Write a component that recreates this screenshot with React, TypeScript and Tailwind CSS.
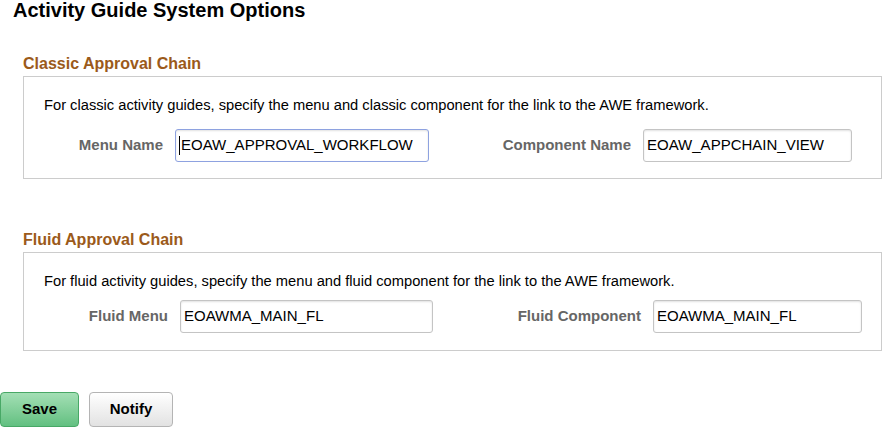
import React from "react";

const font = { fontFamily: '"Liberation Sans", Arial, sans-serif' };

function Field({
  label,
  value,
  labelW,
  inputW,
  focused,
}: {
  label: string;
  value: string;
  labelW: string;
  inputW: string;
  focused?: boolean;
}) {
  return (
    <div className="flex items-center gap-[12px]">
      <div className={`${labelW} text-right text-[15px] font-bold text-[#666666]`}>{label}</div>
      <div
        className={`${inputW} h-[33px] flex items-center px-[3px] rounded-[3px] border bg-white text-[15px] text-black shadow-[inset_0_1px_2px_rgba(0,0,0,0.12)] ${
          focused ? "border-[#8ea2e0]" : "border-[#c4c4c4]"
        }`}
      >
        {focused && <span className="w-px h-[19px] bg-black mr-px" />}
        {value}
      </div>
    </div>
  );
}

export default function App() {
  return (
    <div className="w-[882px] h-[429px] bg-white overflow-hidden" style={font}>
      <h1 className="pl-[13px] text-[20px] leading-[20px] font-bold text-black">
        Activity Guide System Options
      </h1>

      <section className="pl-[23px] mt-[35px]">
        <h2 className="text-[16px] leading-[18px] font-bold text-[#9b5a1a]">Classic Approval Chain</h2>
        <div className="mt-[3px] h-[103px] border border-[#cccccc] pl-[20px] pt-[20px]">
          <p className="text-[14.7px] leading-[17px] text-black">
            For classic activity guides, specify the menu and classic component for the link to the AWE framework.
          </p>
          <div className="flex mt-[15px]">
            <Field label="Menu Name" value="EOAW_APPROVAL_WORKFLOW" labelW="w-[119px]" inputW="w-[254px]" focused />
            <Field label="Component Name" value="EOAW_APPCHAIN_VIEW" labelW="w-[202px]" inputW="w-[209px]" />
          </div>
        </div>
      </section>

      <section className="pl-[23px] mt-[52px]">
        <h2 className="text-[16px] leading-[18px] font-bold text-[#9b5a1a]">Fluid Approval Chain</h2>
        <div className="mt-[3px] h-[99px] border border-[#cccccc] pl-[20px] pt-[20px]">
          <p className="text-[14.7px] leading-[17px] text-black">
            For fluid activity guides, specify the menu and fluid component for the link to the AWE framework.
          </p>
          <div className="flex mt-[10px]">
            <Field label="Fluid Menu" value="EOAWMA_MAIN_FL" labelW="w-[124px]" inputW="w-[253px]" />
            <Field label="Fluid Component" value="EOAWMA_MAIN_FL" labelW="w-[208px]" inputW="w-[209px]" />
          </div>
        </div>
      </section>

      <div className="flex gap-[10px] mt-[41px]">
        <button className="w-[79px] h-[35px] rounded-[4px] border border-[#48a866] bg-gradient-to-b from-[#a3dfb5] to-[#62c081] text-[15px] font-bold text-black">
          Save
        </button>
        <button className="w-[84px] h-[35px] rounded-[4px] border border-[#b4b4b4] bg-gradient-to-b from-[#ffffff] to-[#e2e2e2] text-[15px] font-bold text-black">
          Notify
        </button>
      </div>
    </div>
  );
}
